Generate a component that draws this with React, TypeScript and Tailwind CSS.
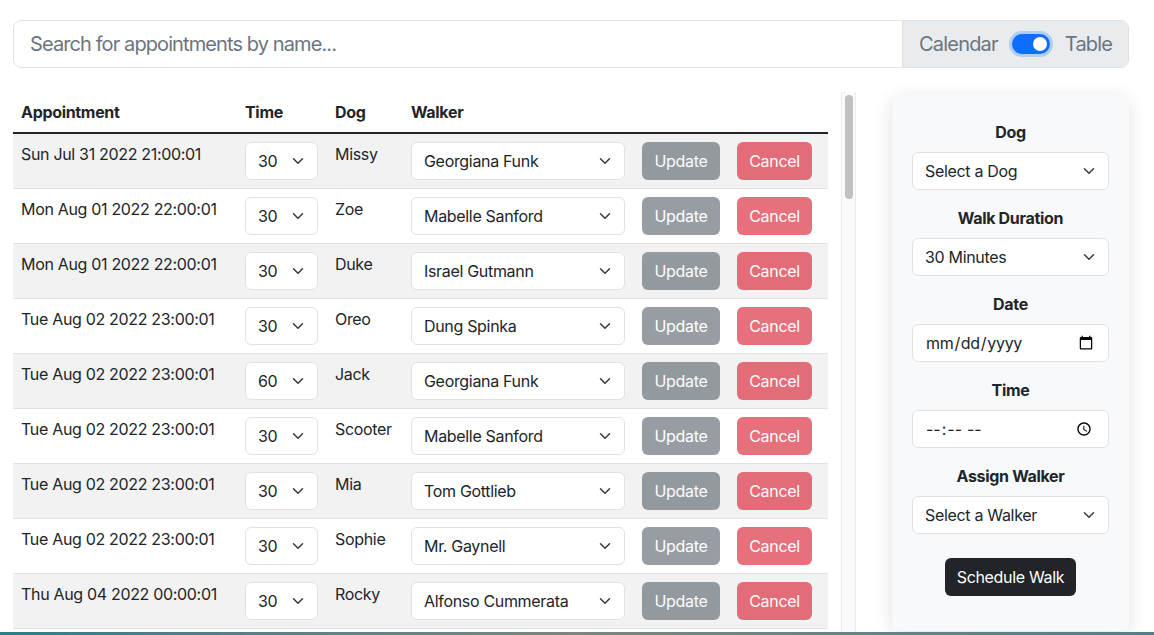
import React from 'react'

const font = { fontFamily: 'Inter, "Noto Sans", "Liberation Sans", sans-serif', letterSpacing: '-0.02em' }

const base = [
  ['Sun Jul 31 2022 21:00:01', '30', 'Missy', 'Georgiana Funk'],
  ['Mon Aug 01 2022 22:00:01', '30', 'Zoe', 'Mabelle Sanford'],
  ['Mon Aug 01 2022 22:00:01', '30', 'Duke', 'Israel Gutmann'],
  ['Tue Aug 02 2022 23:00:01', '30', 'Oreo', 'Dung Spinka'],
  ['Tue Aug 02 2022 23:00:01', '60', 'Jack', 'Georgiana Funk'],
  ['Tue Aug 02 2022 23:00:01', '30', 'Scooter', 'Mabelle Sanford'],
  ['Tue Aug 02 2022 23:00:01', '30', 'Mia', 'Tom Gottlieb'],
  ['Tue Aug 02 2022 23:00:01', '30', 'Sophie', 'Mr. Gaynell'],
  ['Thu Aug 04 2022 00:00:01', '30', 'Rocky', 'Alfonso Cummerata'],
]

const dogs = ['Missy', 'Zoe', 'Duke', 'Oreo', 'Jack', 'Scooter', 'Mia', 'Sophie', 'Rocky']
const walkers = ['Georgiana Funk', 'Mabelle Sanford', 'Israel Gutmann', 'Dung Spinka', 'Tom Gottlieb', 'Mr. Gaynell', 'Alfonso Cummerata']

function Chevron() {
  return (
    <svg
      className="pointer-events-none absolute right-3 top-1/2 -translate-y-1/2"
      width="16"
      height="12"
      viewBox="0 0 16 16"
      fill="none"
      stroke="#343a40"
      strokeWidth="2"
      strokeLinecap="round"
      strokeLinejoin="round"
    >
      <path d="m2 5 6 6 6-6" />
    </svg>
  )
}

function Select({ value, options, className }: { value: string; options: string[]; className: string }) {
  return (
    <div className={`relative ${className}`}>
      <select
        defaultValue={value}
        className="h-[38px] w-full appearance-none rounded-md border border-[#dee2e6] bg-white pl-3 pr-9 text-base text-[#212529] outline-none"
        style={font}
      >
        {options.map((o) => (
          <option key={o}>{o}</option>
        ))}
      </select>
      <Chevron />
    </div>
  )
}

function Label({ children }: { children: React.ReactNode }) {
  return <div className="mb-2 text-center text-base font-bold leading-6 text-[#212529]">{children}</div>
}

export default function App() {
  return (
    <div className="flex h-[635px] flex-col overflow-hidden bg-white text-[#212529]" style={font}>
      <div className="flex-1 px-[13px] pt-5">
        <div className="flex h-12 w-[1116px] overflow-hidden rounded-lg border border-[#dee2e6]">
          <input
            placeholder="Search for appointments by name..."
            className="flex-1 px-4 text-xl text-[#212529] outline-none placeholder:text-[#6c757d]"
            style={{ ...font, letterSpacing: '-0.045em' }}
          />
          <div
            className="flex w-[226px] items-center border-l border-[#dee2e6] bg-[#e9ecef] px-4 text-xl text-[#6c757d]"
            style={{ letterSpacing: '-0.04em' }}
          >
            <span>Calendar</span>
            <span className="relative ml-[14px] mr-[15px] h-5 w-[38px] shrink-0 rounded-full bg-[#0d6efd] shadow-[0_0_0_3px_rgba(13,110,253,0.25)]">
              <span className="absolute right-[3px] top-[3px] h-[14px] w-[14px] rounded-full bg-white" />
            </span>
            <span>Table</span>
          </div>
        </div>

        <div className="mt-6 flex">
          <div className="flex h-[540px] w-[843px]">
            <div className="w-[828px] overflow-hidden">
              <table className="w-[815px] table-fixed border-collapse text-left text-base">
                <colgroup>
                  <col className="w-[224px]" />
                  <col className="w-[90px]" />
                  <col className="w-[76px]" />
                  <col className="w-[231px]" />
                  <col className="w-[95px]" />
                  <col className="w-[99px]" />
                </colgroup>
                <thead>
                  <tr className="border-b-2 border-[#212529]">
                    <th className="p-2 font-bold leading-6">Appointment</th>
                    <th className="p-2 font-bold leading-6">Time</th>
                    <th className="p-2 font-bold leading-6">Dog</th>
                    <th className="p-2 font-bold leading-6">Walker</th>
                    <th className="p-2" />
                    <th className="p-2" />
                  </tr>
                </thead>
                <tbody>
                  {base.map((r, i) => (
                    <tr key={i} className={`border-b border-[#dee2e6] ${i % 2 === 0 ? 'bg-[#f2f2f2]' : 'bg-white'}`}>
                      <td className="p-2 align-top leading-6">{r[0]}</td>
                      <td className="p-2 align-top">
                        <Select value={r[1]} options={['30', '60']} className="w-[73px]" />
                      </td>
                      <td className="p-2 align-top leading-6">{r[2]}</td>
                      <td className="p-2 align-top">
                        <Select value={r[3]} options={walkers} className="w-[214px]" />
                      </td>
                      <td className="p-2 align-top">
                        <button disabled className="h-[38px] w-[78px] rounded-md bg-[#6c757d] text-base text-white opacity-70">
                          Update
                        </button>
                      </td>
                      <td className="p-2 align-top">
                        <button disabled className="h-[38px] w-[75px] rounded-md bg-[#dc3545] text-base text-white opacity-70">
                          Cancel
                        </button>
                      </td>
                    </tr>
                  ))}
                </tbody>
              </table>
            </div>
            {/* scrollbar */}
            <div className="w-[15px] border-x border-[#ececec] bg-[#fafafa] pt-[3px]">
              <div className="mx-auto h-[104px] w-[8px] rounded-full bg-[#c1c1c1]" />
            </div>
          </div>

          <div className="ml-9 mt-[3px] h-[536px] w-[237px] rounded-md bg-[#f8f9fa] px-5 pt-[25px] shadow-[0_4px_18px_rgba(0,0,0,0.12)]">
            <Label>Dog</Label>
            <Select value="Select a Dog" options={['Select a Dog', ...dogs]} className="mb-4 w-full" />
            <Label>Walk Duration</Label>
            <Select value="30 Minutes" options={['30 Minutes', '60 Minutes']} className="mb-4 w-full" />
            <Label>Date</Label>
            <input
              type="date"
              className="mb-4 h-[38px] w-full rounded-md border border-[#dee2e6] bg-white px-3 text-base text-[#212529] outline-none"
              style={font}
            />
            <Label>Time</Label>
            <input
              type="time"
              className="mb-4 h-[38px] w-full rounded-md border border-[#dee2e6] bg-white px-3 text-base text-[#212529] outline-none"
              style={font}
            />
            <Label>Assign Walker</Label>
            <Select value="Select a Walker" options={['Select a Walker', ...walkers]} className="w-full" />
            <div className="mt-6 flex justify-center">
              <button className="h-[38px] rounded-md bg-[#212529] px-3 text-base text-white">Schedule Walk</button>
            </div>
          </div>
        </div>
      </div>
      <div className="h-[3px] bg-gradient-to-r from-[#2f7c8a] via-[#7a8682] to-[#4f8088]" />
    </div>
  )
}
